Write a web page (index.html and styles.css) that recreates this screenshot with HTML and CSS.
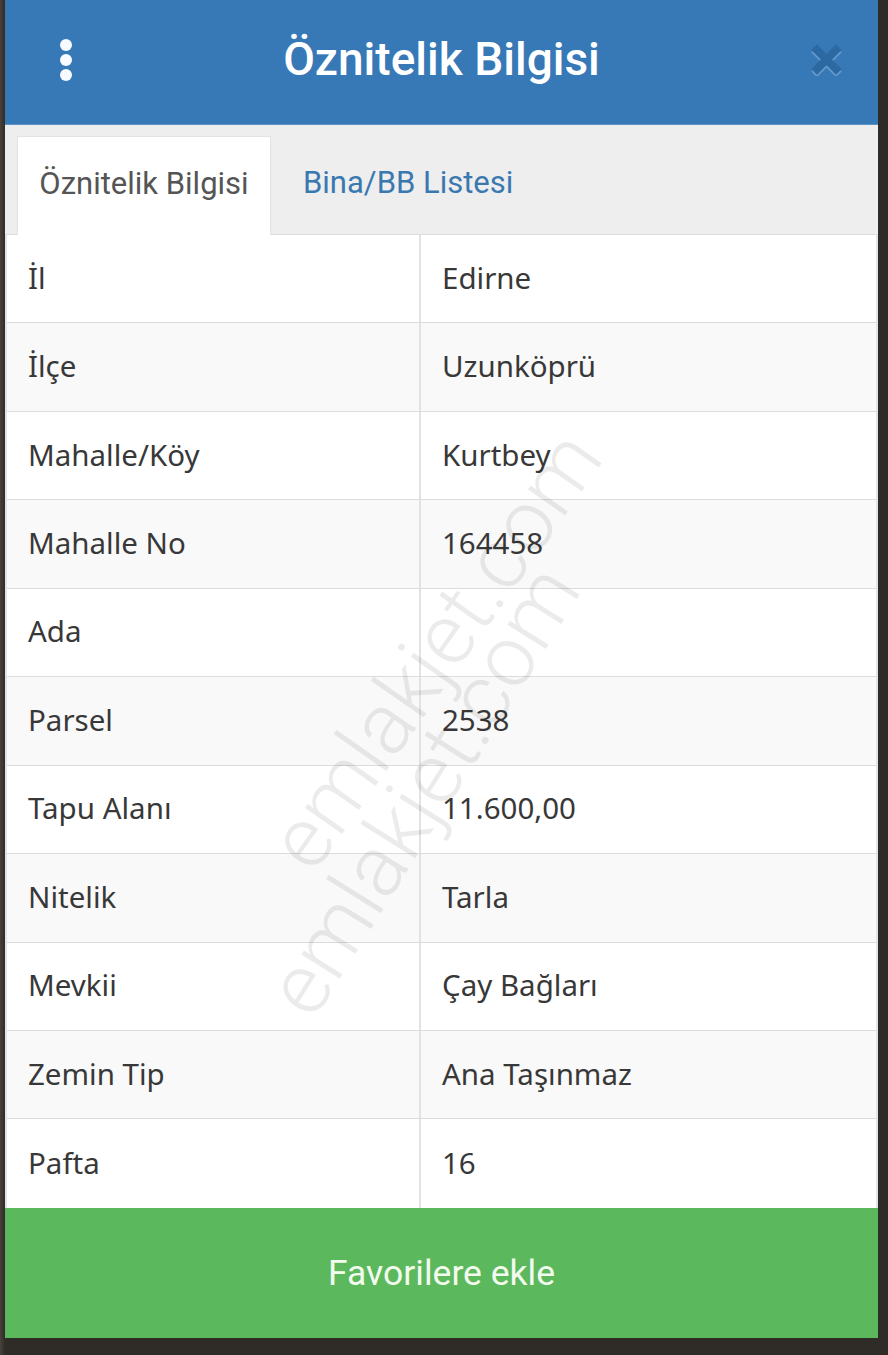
FILE: index.html
```html
<!DOCTYPE html>
<html lang="tr">
<head>
<meta charset="utf-8">
<title>Öznitelik Bilgisi</title>
<link rel="stylesheet" href="styles.css">
</head>
<body>
<div class="screen">
  <div class="modal">
    <header class="header">
      <div class="kebab" aria-label="Menü">
        <span class="dot"></span><span class="dot"></span><span class="dot"></span>
      </div>
      <h1 class="title">Öznitelik Bilgisi</h1>
      <div class="close" aria-label="Kapat">
        <svg width="32" height="32" viewBox="0 0 32 32">
          <path d="M6 7 L25 26 M25 7 L6 26" stroke="#9cc3e6" stroke-width="8" stroke-linecap="square" opacity="0.45" transform="translate(0,1.5)"/>
          <path d="M6 6 L25 25 M25 6 L6 25" stroke="#2c69a3" stroke-width="8" stroke-linecap="square"/>
        </svg>
      </div>
    </header>
    <nav class="tabs">
      <div class="tab tab-active">Öznitelik Bilgisi</div>
      <div class="tab tab-link">Bina/BB Listesi</div>
    </nav>
    <div class="table">
      <div class="row"><div class="cell label">İl</div><div class="cell value">Edirne</div></div>
      <div class="row alt"><div class="cell label">İlçe</div><div class="cell value">Uzunköprü</div></div>
      <div class="row"><div class="cell label">Mahalle/Köy</div><div class="cell value">Kurtbey</div></div>
      <div class="row alt"><div class="cell label">Mahalle No</div><div class="cell value">164458</div></div>
      <div class="row"><div class="cell label">Ada</div><div class="cell value"></div></div>
      <div class="row alt"><div class="cell label">Parsel</div><div class="cell value">2538</div></div>
      <div class="row"><div class="cell label">Tapu Alanı</div><div class="cell value">11.600,00</div></div>
      <div class="row alt"><div class="cell label">Nitelik</div><div class="cell value">Tarla</div></div>
      <div class="row"><div class="cell label">Mevkii</div><div class="cell value">Çay Bağları</div></div>
      <div class="row alt"><div class="cell label">Zemin Tip</div><div class="cell value">Ana Taşınmaz</div></div>
      <div class="row"><div class="cell label">Pafta</div><div class="cell value">16</div></div>
    </div>
    <button class="fav-btn" type="button">Favorilere ekle</button>
    <div class="watermark wm-1" aria-hidden="true">emlakjet.com</div>
    <div class="watermark wm-2" aria-hidden="true">emlakjet.com</div>
  </div>
</div>
</body>
</html>
```

FILE: styles.css
```css
html, body {
  margin: 0;
  padding: 0;
}

body {
  background: #39342f;
  font-family: "Noto Sans", "Open Sans", sans-serif;
}

.screen {
  width: 888px;
  height: 1355px;
  box-sizing: border-box;
  padding: 0 10px 17px 5px;
  background: linear-gradient(90deg, #4a423a 0, #2f2b27 5px, #2f2b27 100%);
}

.modal {
  position: relative;
  overflow: hidden;
  background: #fff;
  display: flex;
  flex-direction: column;
}

.header {
  height: 125px;
  background: #3778b6;
  display: grid;
  grid-template-columns: 150px 1fr 150px;
  align-items: center;
  border-bottom: 1px solid #5b91c4;
  box-sizing: border-box;
}

.kebab {
  display: flex;
  flex-direction: column;
  gap: 3px;
  padding-left: 55px;
  margin-top: -4px;
}

.dot {
  width: 12px;
  height: 12px;
  border-radius: 50%;
  background: #f7fbff;
}

.title {
  margin: 0;
  text-align: center;
  font-family: Roboto, "Noto Sans", sans-serif;
  font-weight: 500;
  font-size: 46px;
  color: #ffffff;
  margin-top: -6px;
}

.close {
  display: flex;
  justify-content: flex-end;
  padding-right: 35px;
  margin-top: -4px;
}

.tabs {
  height: 110px;
  box-sizing: border-box;
  background: #eeeeee;
  border-bottom: 1px solid #dddddd;
  padding: 11px 0 0 12px;
  display: flex;
  align-items: stretch;
}

.tab {
  font-family: Roboto, "Noto Sans", sans-serif;
  font-size: 31px;
  display: flex;
  align-items: center;
}

.tab-active {
  width: 254px;
  box-sizing: border-box;
  justify-content: center;
  background: #ffffff;
  color: #555555;
  border: 1px solid #e2e2e2;
  border-bottom: none;
  margin-bottom: -1px;
  padding-bottom: 5px;
}

.tab-link {
  color: #3a78b0;
  padding-left: 32px;
  padding-bottom: 5px;
}

.table {
  display: flex;
  flex-direction: column;
  border-left: 2px solid #e4e4e4;
  border-right: 2px solid #e4e4e4;
}

.row {
  display: grid;
  grid-template-columns: 414px 1fr;
  height: 88.45px;
  box-sizing: border-box;
  border-bottom: 1px solid #dcdcdc;
  background: #ffffff;
}

.row:last-child {
  border-bottom: none;
}

.row.alt {
  background: #f9f9f9;
}

.cell {
  display: flex;
  align-items: center;
  font-size: 29.5px;
  color: #383838;
  padding-bottom: 3px;
}

.label {
  padding-left: 21px;
  border-right: 2px solid #e2e2e2;
}

.value {
  padding-left: 21px;
}

.fav-btn {
  height: 130px;
  border: none;
  margin: 0;
  background: #5cb85c;
  color: #f3fbef;
  font-family: Roboto, "Noto Sans", sans-serif;
  font-size: 35.5px;
  text-align: center;
  padding: 0;
}

.watermark {
  position: absolute;
  font-family: Roboto, sans-serif;
  font-weight: 300;
  font-size: 86px;
  color: rgba(0, 0, 0, 0.08);
  white-space: nowrap;
  pointer-events: none;
  transform: translate(-50%, -50%) rotate(-55deg);
}

.wm-1 {
  left: 430px;
  top: 650px;
}

.wm-2 {
  left: 418px;
  top: 790px;
  transform: translate(-50%, -50%) rotate(-58deg);
}
```
